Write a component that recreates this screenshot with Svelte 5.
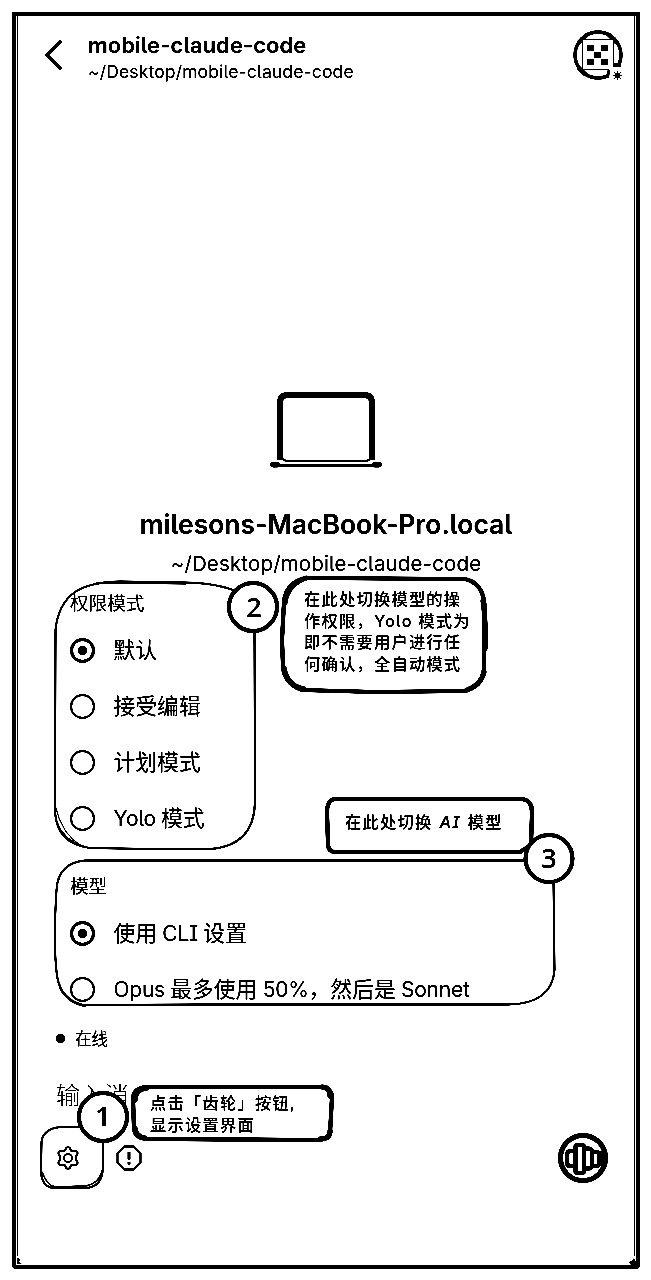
<script>
  const modes = ['默认', '接受编辑', '计划模式', 'Yolo 模式'];
  const models = ['使用 CLI 设置', 'Opus 最多使用 50%，然后是 Sonnet'];
  const notes = [
    { id: 'mode', lines: ['在此处切换模型的操', '作权限，Yolo 模式为', '即不需要用户进行任', '何确认，全自动模式'] },
    { id: 'gear', lines: ['点击「齿轮」按钮,', '显示设置界面'] }
  ];
  // Latin runs are set tighter than the Chinese around them
  const runs = (text) => text.split(/([ -~]+)/).filter(Boolean);
  const isLatin = (run) => /^[ -~]/.test(run);
</script>

{#snippet option(label, on)}
  <div class="option">
    <i class:on></i>
    <span>{#each runs(label) as run}<span class:latin={isLatin(run)}>{run}</span>{/each}</span>
  </div>
{/snippet}

<div class="screen">
  <main class="phone">
    <header>
      <svg class="back" width="18" height="30" viewBox="0 0 18 30"><path d="M16 2 3 15l13 13" /></svg>
      <div class="titles">
        <h1>mobile-claude-code</h1>
        <p>~/Desktop/mobile-claude-code</p>
      </div>
      <svg class="avatar" width="52" height="52" viewBox="0 0 52 52">
        <circle cx="26" cy="26" r="23" fill="#fff" stroke="#000" stroke-width="3.300" />
        <path d="M6 14 16 5M36 5l9 9M6 38l8 8" stroke="#000" stroke-width="4" />
        <path d="M10.500 10.500h31v30h-31z" fill="#fff" stroke="#000" />
        <path d="M15 16h7v6h-7zM29 16h7v6h-7zM22 23h7v6h-7zM15 30h7v6h-7zM29 30h7v6h-7z" />
        <path d="M37 37h15v15H37z" fill="#fff" />
        <path d="M41 34h8v4h-8zM36 40l2 1-1 8-3-1z" />
        <path d="M45.500 42v9M41 46.500h9M42 43l7 7M49 43l-7 7" stroke="#000" stroke-width=".9" />
        <circle cx="45.500" cy="46.500" r="2.300" />
      </svg>
    </header>

    <section class="host">
      <svg width="112" height="76" viewBox="0 0 112 76" fill="none" stroke="#000">
        <path d="M10 68V11q0-8 8-8h76q8 0 8 8v57" stroke-width="5.800" />
        <path d="M12 65q1 4 6 4h76q6 0 7-4" stroke-width="2" />
        <path d="M3 72.500h4M105 72.500h4" stroke-width="5.500" stroke-linecap="round" />
        <path d="M3 73.800h106" stroke-width="3" />
      </svg>
      <h2>milesons-MacBook-Pro.local</h2>
      <p>~/Desktop/mobile-claude-code</p>
    </section>

    <section class="panel modes">
      <h3>权限模式</h3>
      {#each modes as label, i}{@render option(label, i === 0)}{/each}
    </section>

    <section class="panel models">
      <h3>模型</h3>
      {#each models as label, i}{@render option(label, i === 0)}{/each}
    </section>

    <div class="status"><b></b><span>在线</span></div>
    <div class="input">输入消息</div>

    <footer>
      <svg width="24" height="24" viewBox="0 0 24 24" fill="none" stroke="#000" stroke-width="1.800">
        <path d="M12 1.200c1.500 0 2.200 1 2.600 2.500.3 1.200 1.500 1.800 2.700 1.500 2-.5 3.300-.4 4 .8.8 1.400.2 2.400-1 3.600-1 .9-1 3.900 0 4.800 1.200 1.200 1.800 2.200 1 3.600-.7 1.200-2 1.300-4 .8-1.200-.3-2.400.3-2.700 1.500-.4 1.500-1.100 2.500-2.600 2.500s-2.200-1-2.600-2.500c-.3-1.200-1.500-1.800-2.700-1.500-2 .5-3.300.4-4-.8-.8-1.400-.2-2.400 1-3.600 1-.9 1-3.900 0-4.800-1.200-1.200-1.800-2.200-1-3.600.7-1.200 2-1.300 4-.8 1.200.3 2.400-.3 2.700-1.500C9.800 2.200 10.500 1.200 12 1.200z" />
        <circle cx="12" cy="12" r="4" />
      </svg>
      <svg width="26" height="26" viewBox="0 0 26 26" fill="none" stroke="#000" stroke-width="1.900">
        <path d="M8.500 1.500h9l7 7v9l-7 7h-9l-7-7v-9z" />
        <path d="M13 7v7.500M13 17v2.500" stroke-width="2.800" />
      </svg>
      <svg class="voice" width="50" height="50" viewBox="0 0 50 50" fill="none" stroke="#000">
        <circle cx="25" cy="25" r="22.500" stroke-width="5" />
        <rect x="17.500" y="12" width="8.500" height="28" rx="2" stroke-width="4.200" />
        <path d="M17 18h-5q-3 0-3 4v7q0 4 3 4h5M27 15.500h4q3 0 3 4v12q0 4-3 4h-4M35 19h4q2 0 2 3v8q0 3-2 3h-4" stroke-width="4.200" />
        <path d="M43 18v15" stroke-width="4.500" />
      </svg>
    </footer>
  </main>

  <svg class="ink" width="651" height="1280" viewBox="0 0 651 1280" fill="none" stroke="#000" stroke-linecap="round" stroke-linejoin="round">
    <g stroke-width="2">
      <path d="M238 592Q218 583 184 582.500L120 581.500Q90 582 75 592Q58 604 55.500 630L55 812Q57 844 90 848L150 849H210Q254 846 255 802L254.500 632" />
      <path d="M55 805Q62 836 82 846M96 583l90 1M56 820Q64 842 86 847" stroke-width="1" />
      <path d="M534 860.500L310 860.500H85Q58 863 56.500 890Q53 945 57 976Q61 1000 83 1005L200 1004.500H505Q552 1005 554.500 970L553.500 882" />
      <path d="M60 988q8 15 25 18" />
      <path d="M80 1127H60Q43 1129 41.500 1142L41 1172Q42 1188 55 1188H84Q103 1188 103 1166V1140" />
      <path d="M42 1172q6 15 14 15l28-1q14-1 18-15" stroke-width="1.300" />
    </g>
    <g fill="#fff" stroke-width="4.200">
      <path d="M306 578L465 579Q483 583 484.500 605L484 668Q483 687 464 691L375 692L302 690Q284 684 283 666L282 640L284 602Q286 582 306 578z" />
      <path d="M334 799L522 799Q532 800 532 812L531 845L520 852H334Q328 851 328 844L327 812Q327 801 334 799z" />
      <path d="M146 1087L322 1087Q332 1089 332 1097L330 1133Q328 1140 315 1140L146 1139Q136 1138 134 1130L133 1098Q134 1088 146 1087z" />
    </g>
    <path d="M285 603q2-18 21-25M483 601q3 20 2 48M467 690q14-5 17-18M284 668q3 18 20 21M135 1100q0-11 12-12M320 1139q10 0 10-8M330 1096q0-9-8-9M135 1128q1 9 10 10" stroke-width="5" />
    <g fill="#fff" stroke-width="4">
      <circle cx="253" cy="607" r="24" />
      <circle cx="549" cy="858.500" r="23.500" />
      <circle cx="103" cy="1117" r="24" />
    </g>
  </svg>
  {#each notes as note}
    <div class="note {note.id}">
      {#each note.lines as line}<span>{line}</span>{/each}
    </div>
  {/each}
  <div class="note model"><span>在此处切换 <em>AI</em> 模型</span></div>
  <div class="num n1">1</div>
  <div class="num n2">2</div>
  <div class="num n3">3</div>

  <svg class="ink" width="651" height="1280" viewBox="0 0 651 1280">
    <path d="M17.500 16v1240M634.500 16v1240" stroke="#000" />
    <path d="M17 1258l3 1-1 3 3 2h-5zM634 1258l-2 3-3 1 2 3h6z" />
  </svg>
</div>

<style>
  :global(body) { background: #fff; }
  .screen {
    position: relative; box-sizing: border-box; width: 651px; height: 1280px;
    padding: 12px 11px 11px 12px; background: #fff; color: #000;
    font-family: Inter, "Noto Sans CJK SC", sans-serif;
    font-feature-settings: "cv05", "cv08";
    filter: brightness(.8) contrast(6);
  }
  .phone { box-sizing: border-box; height: 1257px; border: 4px solid #000; border-radius: 1px 1px 4px 4px; display: flex; flex-direction: column; }
  h1, h2, h3, p { margin: 0; font-weight: 400; white-space: nowrap; }
  header { display: flex; height: 78px; padding-left: 28px; padding-right: 12px; flex: none; }
  .back { margin-top: 24px; fill: none; stroke: #000; stroke-width: 3.800; stroke-linecap: round; }
  .titles { flex: 1; margin-left: 26px; padding-top: 14px; }
  h1 { font-size: 22px; font-weight: 600; line-height: 30px; letter-spacing: .05px; }
  header p { font-size: 17.500px; line-height: 24px; letter-spacing: .15px; }
  .avatar { margin-top: 13px; }
  .host { box-sizing: border-box; flex: none; height: 467px; margin-top: 15px; padding-top: 283px; display: flex; flex-direction: column; align-items: center; }
  .host svg { flex: none; }
  h2 { flex: none; margin-top: 36px; line-height: 40px; font-size: 26.500px; font-weight: 600; }
  .host p { flex: none; margin-top: 2px; line-height: 36px; font-size: 20.500px; letter-spacing: .15px; }
  .panel { flex: none; padding-left: 54px; box-sizing: border-box; }
  .modes { height: 285px; padding-top: 15px; }
  .models { height: 165px; padding-top: 13px; }
  h3 { margin-bottom: 7px; font-size: 18.600px; line-height: 24px; }
  .option { display: flex; align-items: center; height: 56px; gap: 18.500px; font-size: 21.800px; line-height: 32px; white-space: nowrap; }
  .latin { font-size: 21px; letter-spacing: -.25px; word-spacing: -.4px; white-space: pre; }
  .option i { box-sizing: border-box; width: 25px; height: 25px; border: 2px solid #000; border-radius: 50%; display: grid; place-items: center; }
  .option i.on { border-width: 3px; }
  .option i.on::after { content: ""; width: 9px; height: 9px; border-radius: 50%; background: #000; }
  .status { flex: none; display: flex; align-items: center; gap: 10px; height: 24px; padding-left: 40px; font-size: 16.500px; }
  .status b { width: 9px; height: 9px; border-radius: 50%; background: #000; }
  .input { flex: none; width: 73px; overflow: hidden; white-space: nowrap; margin-left: 40px; margin-top: 28px; height: 36px; font-size: 24.200px; line-height: 36px; font-weight: 300; }
  footer { flex: none; display: flex; align-items: center; padding-left: 40px; padding-right: 28px; margin-top: 19px; height: 50px; gap: 36px; }
  .voice { margin-left: auto; }
  .ink { position: absolute; left: 0; top: 0; pointer-events: none; }
  .note { position: absolute; display: flex; flex-direction: column; font-size: 16.300px; line-height: 21.700px; letter-spacing: 1.200px; font-weight: 500; white-space: nowrap; }
  .mode { left: 304px; top: 589px; }
  .gear { left: 150px; top: 1093px; }
  .model { left: 345px; top: 812px; word-spacing: 1.500px; }
  .num { position: absolute; width: 48px; text-align: center; font: 600 27px/48px "Open Sans", sans-serif; }
  .n1 { left: 79px; top: 1092px; }
  .n2 { left: 230px; top: 583px; }
  .n3 { left: 525px; top: 834px; }
</style>
